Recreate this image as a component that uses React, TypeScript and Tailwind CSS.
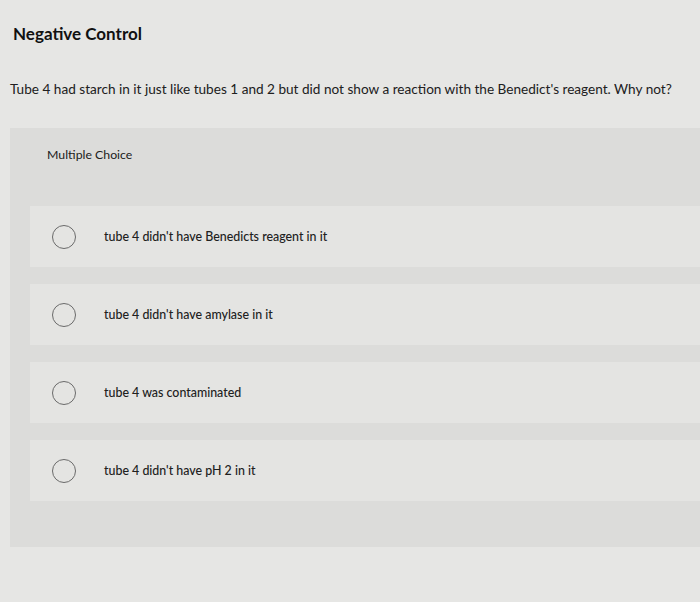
import { } from 'react'

const options = [
  "tube 4 didn't have Benedicts reagent in it",
  "tube 4 didn't have amylase in it",
  'tube 4 was contaminated',
  "tube 4 didn't have pH 2 in it",
]

function Radio() {
  return <span className="w-[24px] h-[24px] rounded-full border-[1.5px] border-[#6a6a6a] shrink-0" />
}

export default function App() {
  return (
    <div
      className="w-[700px] h-[602px] bg-[#e6e6e4] text-[#202020] overflow-hidden"
      style={{ fontFamily: 'Lato, "Open Sans", sans-serif' }}
    >
      <h2 className="pl-[13px] pt-[23px] text-[17px] font-bold leading-[22px] text-[#111]">Negative Control</h2>

      <p className="pl-[10px] pt-[35px] text-[13.6px] leading-[18px]">
        Tube 4 had starch in it just like tubes 1 and 2 but did not show a reaction with the Benedict's reagent. Why not?
      </p>

      <div className="mt-[30px] ml-[10px] bg-[#dcdcda] pb-[46px]">
        <div className="h-[48px] pl-[37px] pt-[19px] text-[12.3px] leading-[16px]">Multiple Choice</div>

        <div className="pt-[30px] flex flex-col gap-[17px]">
          {options.map(o => (
            <div key={o} className="ml-[20px] h-[61px] bg-[#e4e4e2] flex items-center">
              <div className="pl-[22px] flex items-center gap-[28px]">
                <Radio />
                <span className="text-[12.4px] leading-[16px] font-medium">{o}</span>
              </div>
            </div>
          ))}
        </div>
      </div>
    </div>
  )
}
